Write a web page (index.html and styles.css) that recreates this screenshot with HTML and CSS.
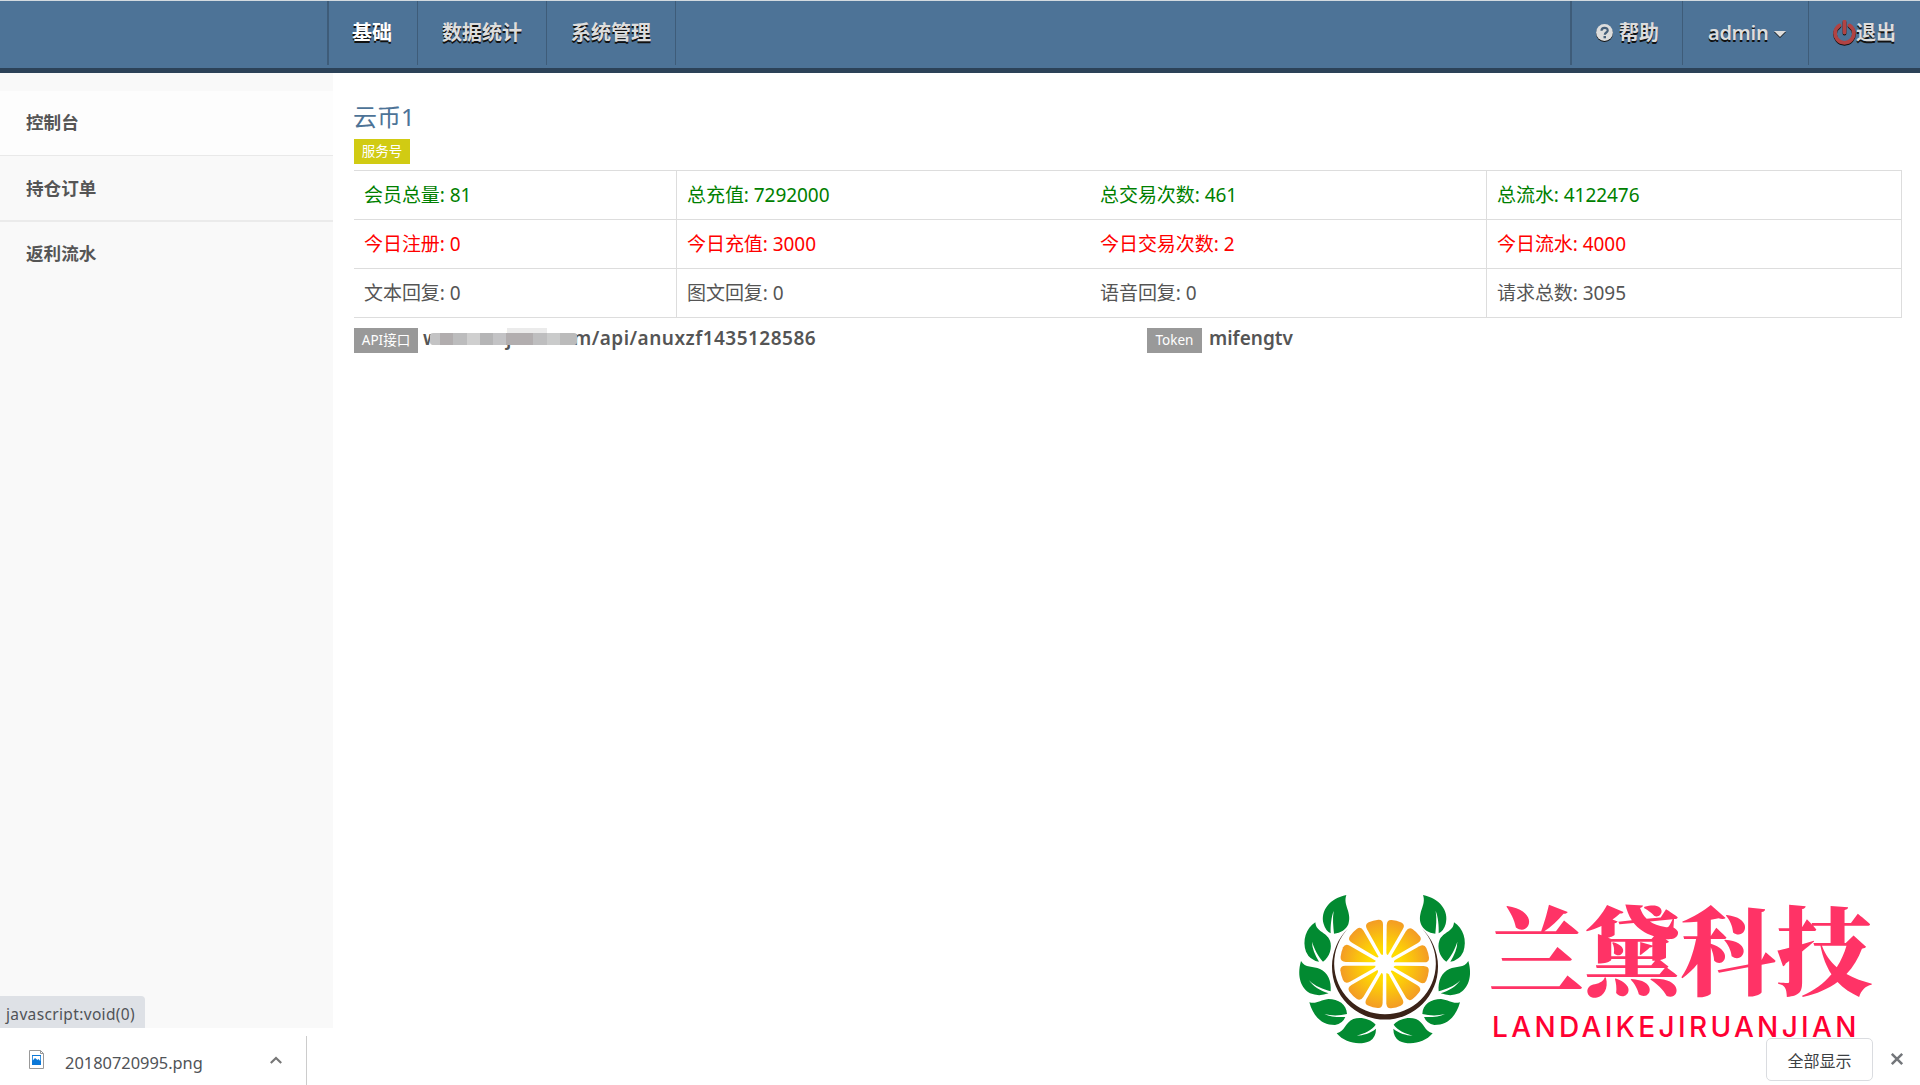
FILE: index.html
```html
<!DOCTYPE html>
<html lang="zh-CN">
<head>
<meta charset="utf-8">
<title>控制台</title>
<link rel="stylesheet" href="styles.css">
</head>
<body>
<header class="topbar">
  <nav class="nav-main">
    <a class="nav-item active">基础</a>
    <a class="nav-item">数据统计</a>
    <a class="nav-item">系统管理</a>
  </nav>
  <nav class="nav-user">
    <a class="nav-item help">
      <svg class="help-icon" viewBox="0 0 17 18"><circle cx="8.5" cy="8.5" r="8.4" fill="#ddd"/><path d="M5.5 6.7c0-3.8 6.2-3.7 6.2-.3 0 2.2-2.9 2-2.9 4.4" fill="none" stroke="#46607a" stroke-width="2.2"/><rect x="7.5" y="12" width="2.5" height="2.3" fill="#46607a"/></svg>
      <span>帮助</span>
    </a>
    <a class="nav-item user"><span>admin</span><svg class="caret" viewBox="0 0 12 6"><path d="M0 0h12L6 6z" fill="#ddd"/></svg></a>
    <a class="nav-item exit">
      <svg class="power-icon" viewBox="0 0 23 26"><path d="M6.3 5.6a9.4 9.4 0 1 0 10.4 0M11.5 1.5v11" fill="none" stroke="#b14343" stroke-width="3.8" stroke-linecap="round"/></svg><span>退出</span>
    </a>
  </nav>
</header>
<div class="body">
  <aside class="sidebar">
    <a class="side-item current">控制台</a>
    <a class="side-item second">持仓订单</a>
    <a class="side-item">返利流水</a>
    <div class="status">javascript:void(0)</div>
  </aside>
  <main class="content">
    <h1 class="title">云币1</h1>
    <span class="tag tag-service">服务号</span>
    <div class="stats">
      <div class="row green"><span>会员总量: 81</span><span>总充值: 7292000</span><span>总交易次数: 461</span><span>总流水: 4122476</span></div>
      <div class="row red"><span>今日注册: 0</span><span>今日充值: 3000</span><span>今日交易次数: 2</span><span>今日流水: 4000</span></div>
      <div class="row"><span>文本回复: 0</span><span>图文回复: 0</span><span>语音回复: 0</span><span>请求总数: 3095</span></div>
    </div>
    <div class="api">
      <div class="api-cell"><span class="tag tag-api">API接口</span><b class="w">w</b><span class="mosaic"><b class="j">j</b><i class="m-top"></i><i class="m-bar"></i></span><b class="url">m/api/anuxzf1435128586</b></div>
      <div class="api-cell"><span class="tag tag-token">Token</span><b class="token">mifengtv</b></div>
    </div>
  </main>
</div>
<footer class="shelf">
  <div class="download">
    <svg class="file-icon" viewBox="0 0 15 19"><path d="M.5.5h11l3 3v15H.5z" fill="#fff" stroke="#999"/><path d="M11.5.5v3h3" fill="none" stroke="#999"/><rect x="3" y="5" width="9" height="10" fill="#0b78d8"/><path d="M3.8 6h7.400v5L9.500 9 8.500 10 6 8 3.800 10.500z" fill="#fff"/></svg>
    <span class="file-name">20180720995.png</span>
    <svg class="chevron" viewBox="0 0 12 8"><path d="M.8 7L6 2l5.200 5" fill="none" stroke="#777" stroke-width="2.200"/></svg>
  </div>
  <div class="shelf-actions">
    <button class="show-all">全部显示</button>
    <svg class="close" viewBox="0 0 12 12"><path d="M.8.8l10.400 10.400M11.200.8L.8 11.200" stroke="#73767a" stroke-width="2.500"/></svg>
  </div>
</footer>
<div class="brand">
  <svg class="brand-mark" viewBox="0 0 630 540">
    <defs>
      <radialGradient id="orange" gradientUnits="userSpaceOnUse" cx="314" cy="252" r="136"><stop offset=".35" stop-color="#ffdc00"/><stop offset="1" stop-color="#f39a26"/></radialGradient>
      <path id="slice" d="M342 247L432 247Q448 247 447 233Q445 217 439 204Q433 191 418 199L345 240Q340 244 342 247Z"/>
      <g id="leaves" fill="#028a31">
        <path d="M199 45C150 55 120 92 131 132Q137 153 152 160C151 138 154 110 161 93C157 115 160 140 162 161C182 160 199 148 205 133C217 96 188 76 199 45Z"/>
        <path d="M106 127C78 145 66 182 78 215Q89 240 117 245C105 225 96 205 96 185C102 205 115 230 129 245C150 230 157 202 150 182C139 155 108 157 106 127Z"/>
        <path d="M63 243C49 292 65 325 90 340Q117 351 146 340C120 332 98 318 87 301C105 320 130 328 152 334C155 303 143 277 120 267C100 258 75 265 63 243Z"/>
        <path d="M88 367C100 410 125 435 165 435Q188 431 196 411C170 412 150 410 133 402C155 408 180 407 201 402C200 373 175 357 145 357C120 360 110 373 88 367Z"/>
        <path d="M170 460C195 490 240 497 270 483Q288 471 288 446C270 460 250 466 230 467C255 460 275 450 287 434C270 415 240 410 220 417C195 427 195 455 170 460Z"/>
      </g>
    </defs>
    <use href="#leaves"/>
    <use href="#leaves" transform="matrix(-1 0 0 1 628 0)"/>
    <path d="M205 145A159 159 0 1 0 425 145A152.500 152.500 0 1 1 205 145Z" fill="#3b2318"/>
    <g fill="url(#orange)">
      <use href="#slice"/><use href="#slice" transform="rotate(30 314 252)"/><use href="#slice" transform="rotate(60 314 252)"/><use href="#slice" transform="rotate(90 314 252)"/><use href="#slice" transform="rotate(120 314 252)"/><use href="#slice" transform="rotate(150 314 252)"/><use href="#slice" transform="rotate(180 314 252)"/><use href="#slice" transform="rotate(210 314 252)"/><use href="#slice" transform="rotate(240 314 252)"/><use href="#slice" transform="rotate(270 314 252)"/><use href="#slice" transform="rotate(300 314 252)"/><use href="#slice" transform="rotate(330 314 252)"/>
    </g>
  </svg>
  <div class="brand-text">
    <div class="brand-cn">兰黛科技</div>
    <div class="brand-en">LANDAIKEJIRUANJIAN</div>
  </div>
</div>
</body>
</html>
```
FILE: styles.css
```css
* { box-sizing: border-box; }
body {
  margin: 0;
  height: 1085px;
  display: flex;
  flex-direction: column;
  overflow: hidden;
  position: relative;
  background: #fff;
  color: #555;
  font-family: "Noto Sans", "Noto Sans CJK SC", sans-serif;
}
i { font-style: normal; }

/* top navigation */
.topbar {
  height: 73px;
  flex: none;
  display: flex;
  justify-content: space-between;
  padding-left: 327px;
  background: #4d7397;
  border-top: 1px solid #d3dadf;
  border-bottom: 5px solid #2c4258;
}
.nav-main, .nav-user { display: flex; height: 64px; }
.nav-main { border-left: 2px solid #3e5c79; }
.nav-item {
  display: flex;
  align-items: center;
  padding: 0 0 1px 23px;
  border-right: 1px solid #3e5c79;
  color: #ddd;
  font-size: 20px;
  font-weight: 700;
  line-height: 30px;
  text-shadow: 0 2px 0 #111;
  white-space: nowrap;
}
.nav-main .nav-item { width: 129px; padding-left: 24px; }
.nav-main .nav-item.active { width: 89px; padding-left: 23px; color: #fff; }
.nav-user { border-left: 2px solid #3e5c79; }
.help { width: 111px; padding-left: 24px; gap: 6px; }
.help-icon { width: 17px; height: 18px; filter: drop-shadow(0 1px 0 #111); }
.user { width: 126px; padding-left: 25px; gap: 6px; font-weight: 600; letter-spacing: -.3px; }
.caret { width: 12px; height: 6px; margin-top: 2px; overflow: visible; filter: drop-shadow(0 1px 0 #111); }
.exit { width: 111px; padding-left: 24px; border-right: 0; }
.power-icon { width: 23px; height: 26px; filter: drop-shadow(0 1px 0 #111); }

/* sidebar */
.body { flex: 1; display: flex; min-height: 0; }
.sidebar {
  width: 333px;
  flex: none;
  display: flex;
  flex-direction: column;
  padding-top: 18px;
  background: #f9f9f9;
}
.side-item {
  height: 64px;
  display: flex;
  align-items: center;
  padding: 0 0 3px 26px;
  font-size: 17.6px;
  font-weight: 700;
}
.side-item.current { height: 65px; background: #fdfdfd; border-bottom: 1px solid #e9e9e9; }
.side-item.second { height: 66px; padding-bottom: 2px; border-bottom: 2px solid #ebebeb; }
.status {
  margin-top: auto;
  width: 145px;
  height: 32px;
  padding-left: 6px;
  border-radius: 0 4px 0 0;
  background: #dee1e6;
  color: #505357;
  font-size: 15.5px;
  letter-spacing: .35px;
  line-height: 36px;
  white-space: nowrap;
}

/* content */
.content { flex: 1; padding: 26px 18px 0 21px; }
.title { margin: 0 0 0 -1px; height: 40px; font-size: 24px; line-height: 36px; font-weight: 400; color: #4d7397; }
.tag {
  display: block;
  height: 25px;
  color: #fff;
  font-size: 13.5px;
  line-height: 25px;
  text-align: center;
  background: #999;
  white-space: nowrap;
}
.tag-service { width: 56px; background: #d1cb13; }
.stats { margin-top: 6px; border: 1px solid #ddd; border-left: 0; font-size: 19px; }
.row { display: grid; grid-template-columns: 323px 413px 397px 1fr; height: 49px; border-bottom: 1px solid #ddd; }
.row:last-child { margin-bottom: -1px; border-bottom: 0; }
.row span { padding-left: 10px; line-height: 49px; white-space: nowrap; letter-spacing: -.05px; }
.row span:nth-child(1), .row span:nth-child(3) { border-right: 1px solid #ddd; }
.green { color: #008000; }
.red { color: #f00; }
.api { display: grid; grid-template-columns: 793px 1fr; margin-top: 10px; }
.api-cell { display: flex; height: 25px; font-size: 19px; line-height: 21px; font-weight: 600; }
.tag-api { width: 64px; font-weight: 400; }
.tag-token { width: 55px; font-weight: 400; margin-right: 7px; }
.w { margin-left: 5px; width: 7px; font-weight: 600; }
.mosaic { position: relative; width: 143px; }
.j { position: absolute; left: 76px; top: 0; font-weight: 600; }
.m-top { position: absolute; left: 77px; top: 0; width: 40px; height: 6px; background: #ebebeb; }
.m-bar {
  position: absolute;
  left: 0;
  top: 5px;
  width: 147px;
  height: 12px;
  border-radius: 3px;
  background: linear-gradient(90deg, #c3c3c4 0 10px, #b1adae 10px 23px, #bcbcbd 23px 37px, #cfcfcf 37px 50px, #b5b5b6 50px 63px, #c3c3c5 63px 76px, #b2aeaf 76px 103px, #bebebf 103px 117px, #cacbcb 117px 130px, #bbb 130px);
}
.url, .token { font-weight: 600; }
.url { letter-spacing: .47px; }

/* download shelf */
.shelf { height: 57px; flex: none; display: flex; justify-content: space-between; padding-top: 8px; }
.download { width: 307px; display: flex; align-items: flex-start; padding: 14px 24px 0 29px; border-right: 1px solid #ccc; }
.file-icon { width: 15px; height: 19px; }
.file-name { margin-left: 21px; flex: 1; font-size: 16.4px; line-height: 25px; color: #505357; white-space: nowrap; }
.chevron { width: 12px; height: 8px; margin-top: 6px; }
.shelf-actions { display: flex; padding: 2px 17px 0 0; gap: 18px; position: relative; z-index: 2; }
.show-all {
  width: 107px;
  height: 43px;
  padding: 0;
  border: 1px solid #dadce0;
  border-radius: 5px;
  background: #fff;
  color: #3c4043;
  font: 16px "Noto Sans", "Noto Sans CJK SC", sans-serif;
}
.close { width: 12px; height: 12px; margin-top: 15px; overflow: visible; }

/* watermark laid over the page */
.brand { position: absolute; left: 1280px; top: 880px; display: flex; pointer-events: none; }
.brand-mark { width: 210px; height: 180px; }
.brand-text { padding: 10px 0 0 3px; white-space: nowrap; }
.brand-cn { height: 112px; margin-left: -5px; font: 900 96px/112px "Noto Serif CJK SC", "Noto Sans CJK SC", serif; color: #ff3366; }
.brand-en { height: 40px; margin: 5px 0 0 -1px; font: 500 28px/40px Inter, sans-serif; letter-spacing: 3.35px; color: #ff0033; }
```
